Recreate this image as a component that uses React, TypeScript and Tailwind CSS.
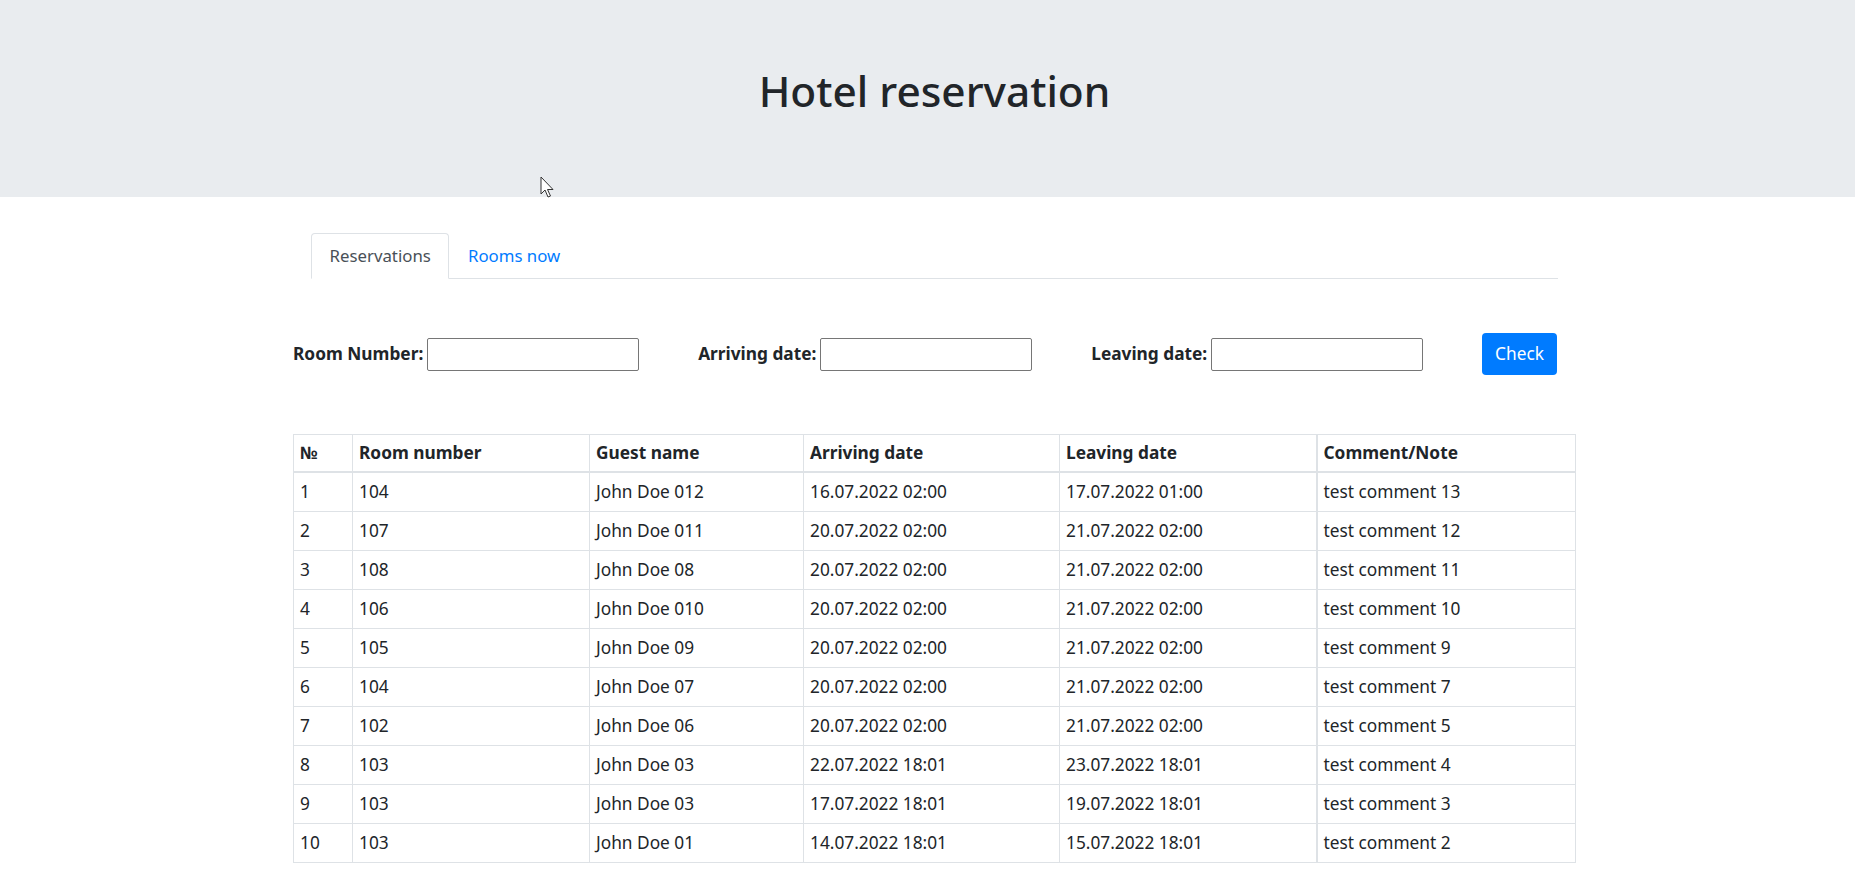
import React from 'react';

const rows = [
  { n: 1, room: '104', guest: 'John Doe 012', arrive: '16.07.2022 02:00', leave: '17.07.2022 01:00', note: 'test comment 13' },
  { n: 2, room: '107', guest: 'John Doe 011', arrive: '20.07.2022 02:00', leave: '21.07.2022 02:00', note: 'test comment 12' },
  { n: 3, room: '108', guest: 'John Doe 08', arrive: '20.07.2022 02:00', leave: '21.07.2022 02:00', note: 'test comment 11' },
  { n: 4, room: '106', guest: 'John Doe 010', arrive: '20.07.2022 02:00', leave: '21.07.2022 02:00', note: 'test comment 10' },
  { n: 5, room: '105', guest: 'John Doe 09', arrive: '20.07.2022 02:00', leave: '21.07.2022 02:00', note: 'test comment 9' },
  { n: 6, room: '104', guest: 'John Doe 07', arrive: '20.07.2022 02:00', leave: '21.07.2022 02:00', note: 'test comment 7' },
  { n: 7, room: '102', guest: 'John Doe 06', arrive: '20.07.2022 02:00', leave: '21.07.2022 02:00', note: 'test comment 5' },
  { n: 8, room: '103', guest: 'John Doe 03', arrive: '22.07.2022 18:01', leave: '23.07.2022 18:01', note: 'test comment 4' },
  { n: 9, room: '103', guest: 'John Doe 03', arrive: '17.07.2022 18:01', leave: '19.07.2022 18:01', note: 'test comment 3' },
  { n: 10, room: '103', guest: 'John Doe 01', arrive: '14.07.2022 18:01', leave: '15.07.2022 18:01', note: 'test comment 2' },
];

const th = 'border border-[#dee2e6] border-b-2 px-[6px] py-[5px] text-left font-bold leading-[26px]';
const td = 'border border-[#dee2e6] px-[6px] py-[6px] leading-[26px]';

function Field({ label }: { label: string }) {
  return (
    <div className="flex items-center gap-1">
      <label className="font-bold">{label}</label>
      <input type="text" className="w-[212px] h-[33px] border border-[#767676] rounded-[2px] px-1 outline-none" />
    </div>
  );
}

export default function App() {
  return (
    <div className="relative min-h-screen bg-white text-[#212529] text-[17.3px] font-['Noto_Sans',sans-serif]">
      {/* Header */}
      <div className="h-[197px] bg-[#e9ecef] pt-[66px] pl-[14px]">
        <h1 className="text-center text-[42.4px] leading-[1.2] font-medium">Hotel reservation</h1>
      </div>

      <div className="pl-[293px]">
        {/* Tabs */}
        <ul className="mt-[36px] ml-[18px] w-[1247px] flex border-b border-[#dee2e6] text-[16.8px]">
          <li className="-mb-px">
            <a className="block px-[17.6px] py-[9px] leading-[26.4px] text-[#495057] bg-white border border-[#dee2e6] border-b-white rounded-t-[4px]">
              Reservations
            </a>
          </li>
          <li className="-mb-px">
            <a className="block px-[17.6px] py-[9px] leading-[26.4px] text-[#007bff] border border-transparent">
              Rooms now
            </a>
          </li>
        </ul>

        {/* Form */}
        <div className="mt-[54px] w-[1264px] h-[42px] flex items-center justify-between">
          <Field label="Room Number:" />
          <Field label="Arriving date:" />
          <Field label="Leaving date:" />
          <button className="h-[42px] px-[13px] bg-[#007bff] text-white rounded-[4px] leading-[26px]">Check</button>
        </div>

        {/* Table */}
        <table className="mt-[59px] w-[1282px] table-fixed border-collapse">
          <colgroup>
            <col className="w-[59px]" />
            <col className="w-[237px]" />
            <col className="w-[214px]" />
            <col className="w-[256px]" />
            <col className="w-[257px]" />
            <col className="w-[259px]" />
          </colgroup>
          <thead>
            <tr>
              <th className={th}>№</th>
              <th className={th}>Room number</th>
              <th className={th}>Guest name</th>
              <th className={th}>Arriving date</th>
              <th className={th}>Leaving date</th>
              <th className={th + ' border-l-2'}>Comment/Note</th>
            </tr>
          </thead>
          <tbody>
            {rows.map((r) => (
              <tr key={r.n}>
                <td className={td}>{r.n}</td>
                <td className={td}>{r.room}</td>
                <td className={td}>{r.guest}</td>
                <td className={td}>{r.arrive}</td>
                <td className={td}>{r.leave}</td>
                <td className={td + ' border-l-2'}>{r.note}</td>
              </tr>
            ))}
          </tbody>
        </table>
      </div>

      {/* mouse cursor captured in the screenshot */}
      <svg className="absolute left-[540px] top-[176px]" width="15" height="24" viewBox="0 0 15 24">
        <path d="M1 1 L1 18 L5 14 L8 21 L10.5 20 L7.5 13.5 L13 13.5 Z" fill="white" stroke="#333" strokeWidth="1" strokeLinejoin="round" />
      </svg>
    </div>
  );
}
